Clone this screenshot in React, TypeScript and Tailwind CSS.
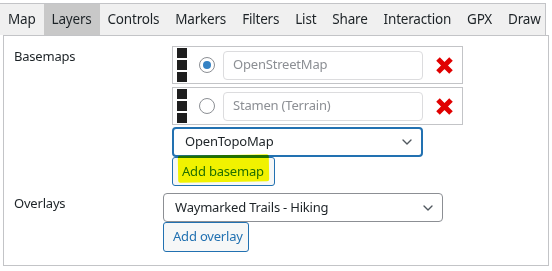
import { ChevronDown } from 'lucide-react';

const tabs = ['Map', 'Layers', 'Controls', 'Markers', 'Filters', 'List', 'Share', 'Interaction', 'GPX', 'Draw'];

const basemaps = [
  { name: 'OpenStreetMap', checked: true },
  { name: 'Stamen (Terrain)', checked: false },
];

function DragHandle() {
  return (
    <div className="flex flex-col gap-[2px]">
      <span className="block w-[10px] h-[10px] bg-[#1e1e1e]" />
      <span className="block w-[10px] h-[10px] bg-[#1e1e1e]" />
      <span className="block w-[10px] h-[10px] bg-[#1e1e1e]" />
    </div>
  );
}

function RedCross() {
  return (
    <svg width="19" height="19" viewBox="0 0 19 19">
      <path d="M3 3 L16 16 M16 3 L3 16" stroke="#e00000" strokeWidth="5" strokeLinecap="butt" />
    </svg>
  );
}

export default function App() {
  return (
    <div
      className="w-[552px] h-[271px] bg-white pt-[3px] text-[13px] tracking-[-0.2px] text-[#1d2327]"
      style={{ fontFamily: '"Noto Sans", "Open Sans", sans-serif' }}
    >
      <nav className="flex w-[546px] h-[32px] bg-[#f0f0f0] border-t border-r border-[#c3c4c7] text-[13.5px]">
        {tabs.map((tab) => (
          <div
            key={tab}
            className={`flex items-center px-2 h-full ${tab === 'Layers' ? 'bg-[#c8c8c8]' : ''}`}
          >
            {tab}
          </div>
        ))}
      </nav>

      <div className="ml-[3px] w-[546px] h-[231px] border border-[#c3c4c7] pl-[10px] pt-[10px]">
        <div className="flex">
          <div className="w-[149px] leading-[20px]">Basemaps</div>
          <div className="flex flex-col">
            <div className="ml-[9px] flex flex-col gap-[3px]">
              {basemaps.map((b) => (
                <div
                  key={b.name}
                  className="flex items-center w-[291px] h-[38px] border border-[#c3c4c7] pl-[4px]"
                >
                  <DragHandle />
                  <span className="ml-[12px] w-[16px] h-[16px] rounded-full border border-[#8c8f94] bg-white flex items-center justify-center">
                    {b.checked && <span className="block w-[8px] h-[8px] rounded-full bg-[#3582c4]" />}
                  </span>
                  <div className="ml-[8px] w-[200px] h-[29px] border border-[#dcdcde] rounded-[4px] flex items-center pl-[9px] text-[#8c8f94]">
                    {b.name}
                  </div>
                  <span className="ml-[12px] flex items-center">
                    <RedCross />
                  </span>
                </div>
              ))}
            </div>
            <div className="ml-[9px] mt-[2px] w-[251px] h-[30px] border-2 border-[#2271b1] rounded-[4px] flex items-center justify-between pl-[11px] pr-[6px]">
              <span>OpenTopoMap</span>
              <ChevronDown size={16} strokeWidth={2} className="text-[#50575e]" />
            </div>
            <div className="relative ml-[9px] w-[103px] h-[29px] border border-[#2271b1] rounded-[3px] bg-[#f6f7f7] flex items-center pl-[9px] text-[#2271b1]">
              Add basemap
              <span className="absolute left-[5px] top-[-3px] w-[91px] h-[27px] bg-[#fafa00] mix-blend-multiply rounded-[2px] -rotate-1" />
            </div>
          </div>
        </div>

        <div className="flex mt-[7px]">
          <div className="w-[149px] leading-[20px]">Overlays</div>
          <div className="flex flex-col">
            <div className="w-[280px] h-[29px] border border-[#8c8f94] rounded-[4px] flex items-center justify-between pl-[11px] pr-[6px] bg-white">
              <span>Waymarked Trails - Hiking</span>
              <ChevronDown size={16} strokeWidth={2} className="text-[#50575e]" />
            </div>
            <div className="w-[86px] h-[30px] border border-[#2271b1] rounded-[3px] bg-[#f6f7f7] flex items-center pl-[9px] text-[#2271b1]">
              Add overlay
            </div>
          </div>
        </div>
      </div>
    </div>
  );
}
